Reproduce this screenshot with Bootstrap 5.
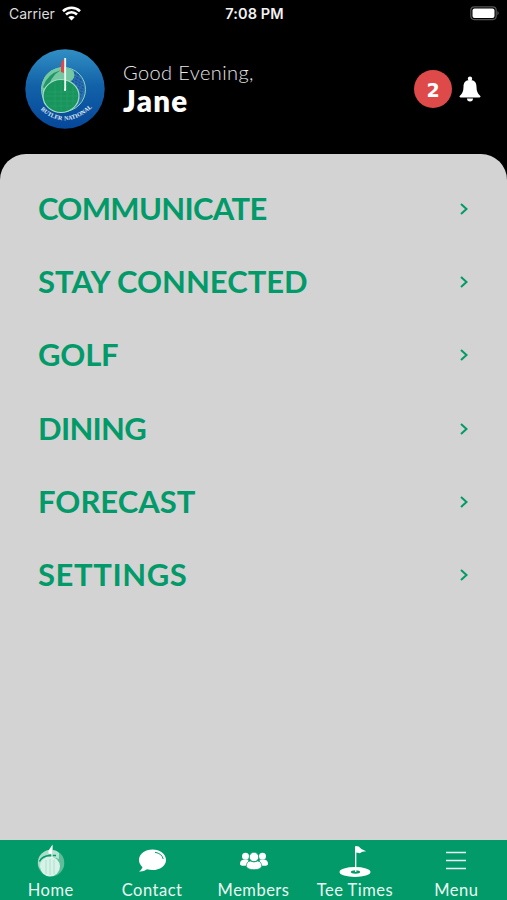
<!DOCTYPE html>
<html lang="en">
<head>
<meta charset="utf-8">
<meta name="viewport" content="width=device-width, initial-scale=1">
<title>Butler National</title>
<link href="https://cdn.jsdelivr.net/npm/bootstrap@5.3.0/dist/css/bootstrap.min.css" rel="stylesheet">
<style>
body{font-family:Lato,"Open Sans",sans-serif;background:#000;-webkit-font-smoothing:antialiased}
svg{display:block;flex:none}
.app{height:900px}
.status-bar{height:27px;padding:0 7px 0 9px;font-family:Inter,Roboto,sans-serif;font-size:14px;color:#dcdcdc;display:grid;grid-template-columns:1fr auto 1fr}
.status-time{font-weight:600;font-size:14.500px;color:#f2f2f2;letter-spacing:.1px}
.signal{margin-left:7px}
.hero{height:127px;padding:0 26px 3px 25px}
.who{margin-left:18px;padding-bottom:1px}
.greeting{font-size:20px;line-height:24px;color:#e6e6e6;font-weight:300;letter-spacing:.4px}
.user-name{font-size:29.500px;line-height:34px;font-weight:800;letter-spacing:1.300px}
.alert-count{width:38px;height:38px;background:#dd4a49;font-family:"DejaVu Sans",sans-serif;font-size:19px;font-weight:700;padding-top:3px}
.alerts{gap:7px}
.panel{background:#d3d3d3;border-radius:26px 26px 0 0;padding-top:18px;color:#029a69}
.menu-row{height:73.3px;padding:0 38px;font-size:31px;font-weight:700;color:inherit;text-decoration:none}
.menu-row span{padding-bottom:1.500px}
.tight{letter-spacing:-.68px}
.snug{letter-spacing:-.2px}
.loose{letter-spacing:.6px}
.tabs{height:60px;background:#029a69}
.tab{color:#e9f8f2;font-size:16.500px;line-height:18px;text-decoration:none;padding-top:4px;letter-spacing:.5px}
.tab-icon{height:37px}
</style>
<script src="https://cdn.jsdelivr.net/npm/bootstrap@5.3.0/dist/js/bootstrap.bundle.min.js"></script>
</head>
<body>
<div class="app d-flex flex-column overflow-hidden">
  <div class="status-bar align-items-center">
    <div class="d-flex align-items-center"><span>Carrier</span>
      <svg class="signal" width="19" height="15" viewBox="0 0 19 15" fill="none" stroke="#fff" stroke-width="2.6"><path d="M1 5.2a12.3 12.3 0 0 1 17 0M4 8.500a8 8 0 0 1 11 0"/><path d="M9.500 14.500 6.300 11.300a4.600 4.600 0 0 1 6.400 0z" fill="#fff" stroke="none"/></svg>
    </div>
    <div class="status-time">7:08 PM</div>
    <div class="d-flex justify-content-end"><svg width="30" height="15" viewBox="0 0 30 15"><rect x=".8" y=".8" width="25.400" height="12.800" rx="3.500" fill="none" stroke="#555" stroke-width="1.200"/><rect x="2.500" y="2.500" width="22" height="9.400" rx="2" fill="#fff"/><path d="M27.500 5q2.200 2.200 0 4.400z" fill="#666"/></svg></div>
  </div>
  <header class="hero d-flex align-items-center text-white">
    <svg width="80" height="80" viewBox="0 0 80 80">
      <defs><linearGradient id="sky" x1="0" y1="0" x2="0" y2="1"><stop offset="0" stop-color="#318fc4"/><stop offset=".45" stop-color="#1262a8"/><stop offset="1" stop-color="#06479a"/></linearGradient><path id="arc" d="M15.500 60.500Q40 83 67 58.500"/></defs>
      <circle cx="40" cy="40" r="39.700" fill="url(#sky)"/>
      <circle cx="38.500" cy="40.500" r="22" fill="#2b6fb0" stroke="#86d5b6" stroke-width="1"/>
      <path d="M49 23.500l5 3m-6 0 9 5m-10-2.500 11 6.500m-11-3.500 12 7m-10-2.500 10 5.500m-7-1 6 4m-4 1 2 2" stroke="#16569f" stroke-width="1.400" stroke-dasharray="2.500 1.200"/>
      <path d="M17 37C18 25 27 18 40 18.500q10 1 9.500 8-1 7-9 6-11-1-15 7-4 6-4 14-5-8-4.500-16.500z" fill="#74c8a2"/>
      <path d="M18 38q4-13 18-17Q25 27 22 43z" fill="#239669"/>
      <ellipse cx="36" cy="47" rx="18" ry="16.500" fill="#17955c" stroke="#a2ddc2" stroke-width="1.200"/>
      <path d="M22 43h29M20 47h32M21 52h30M25 57h22M30 33v27M36 31v31M42 32v29M48 37v20" stroke="#3fb07f" stroke-width=".6" opacity=".5"/>
      <rect x="39.200" y="9" width="1.900" height="32" fill="#e9f6f1"/><circle cx="40" cy="41" r="1" fill="#fff"/>
      <path d="M39 10v14l-3-1V15q1-4 3-5z" fill="#e0454a"/>
      <text font-family="Liberation Serif" font-size="5.900" font-weight="700" fill="#e4f1f8" word-spacing="1"><textPath href="#arc">BUTLER NATIONAL</textPath></text>
    </svg>
    <div class="who me-auto"><div class="greeting">Good Evening,</div><div class="user-name">Jane</div></div>
    <div class="alerts d-flex align-items-center">
      <span class="alert-count rounded-circle d-flex align-items-center justify-content-center">2</span>
      <svg width="22" height="26" viewBox="0 0 22 26" fill="#fff"><circle cx="11" cy="2.800" r="2.200"/><path d="M11 4C6 4 4.500 7 4.500 11q0 6-3.800 9-.8 1 .8 1.400h19q1.600-.4.800-1.400-3.800-3-3.800-9C17.500 7 16 4 11 4z"/><path d="M8 22.400h6q0 3-3 3t-3-3z"/></svg>
    </div>
  </header>
  <main class="panel flex-grow-1 d-flex flex-column">
    <a class="menu-row d-flex align-items-center justify-content-between" href="#"><span class="tight">COMMUNICATE</span><svg width="11" height="14" viewBox="0 0 11 14" fill="none" stroke="currentColor" stroke-width="2"><path d="M3 2 8.500 7 3 12"/></svg></a>
    <a class="menu-row d-flex align-items-center justify-content-between" href="#"><span>STAY CONNECTED</span><svg width="11" height="14" viewBox="0 0 11 14" fill="none" stroke="currentColor" stroke-width="2"><path d="M3 2 8.500 7 3 12"/></svg></a>
    <a class="menu-row d-flex align-items-center justify-content-between" href="#"><span class="snug">GOLF</span><svg width="11" height="14" viewBox="0 0 11 14" fill="none" stroke="currentColor" stroke-width="2"><path d="M3 2 8.500 7 3 12"/></svg></a>
    <a class="menu-row d-flex align-items-center justify-content-between" href="#"><span class="tight">DINING</span><svg width="11" height="14" viewBox="0 0 11 14" fill="none" stroke="currentColor" stroke-width="2"><path d="M3 2 8.500 7 3 12"/></svg></a>
    <a class="menu-row d-flex align-items-center justify-content-between" href="#"><span>FORECAST</span><svg width="11" height="14" viewBox="0 0 11 14" fill="none" stroke="currentColor" stroke-width="2"><path d="M3 2 8.500 7 3 12"/></svg></a>
    <a class="menu-row d-flex align-items-center justify-content-between" href="#"><span class="loose">SETTINGS</span><svg width="11" height="14" viewBox="0 0 11 14" fill="none" stroke="currentColor" stroke-width="2"><path d="M3 2 8.500 7 3 12"/></svg></a>
  </main>
  <nav class="tabs row g-0 flex-nowrap text-center">
    <a class="tab col" href="#"><div class="tab-icon d-flex justify-content-center"><svg width="30" height="34" viewBox="0 0 30 34"><circle cx="15" cy="19" r="13.300" fill="#5fbd9a"/><path d="M2 19C2 11 8 6.500 14 6q-3 4-1 7-6 1-9 12-2-3-2-6z" fill="#a9dfca"/><path d="M17 6q4 .5 6 3v6l-6-2z" fill="#b5e3d2"/><circle cx="14" cy="22.500" r="10" fill="#d7f2e8"/><path d="M3.500 17.500Q6 12 14 11.500h6" stroke="#029a69" stroke-width="1.500" fill="none"/><path d="M10 16v14M14 15v16M18 16v14" stroke="#a3dcc7" stroke-width=".8"/><path d="M16 14V2.500L13 7v2.500l3-.5" fill="#fff" stroke="#fff" stroke-width="1.200"/></svg></div><span>Home</span></a>
    <a class="tab col" href="#"><div class="tab-icon d-flex justify-content-center"><svg width="30" height="34" viewBox="0 0 30 34"><path d="M15.500 5.500C8 5.500 2 10 2 16q0 4 3.500 7.200Q4.500 26 2 27.500q4.500.5 8-2.200 2.500.8 5.500.8C23 26.100 29 22 29 16S23 5.500 15.500 5.500z" fill="#fff"/><path d="M18 8.300q7 1.200 8.200 6.700" fill="none" stroke="#029a69" stroke-width="1"/></svg></div><span>Contact</span></a>
    <a class="tab col" href="#"><div class="tab-icon d-flex justify-content-center"><svg width="30" height="34" viewBox="0 0 30 34" fill="#fff"><circle cx="6.500" cy="12.300" r="3.500"/><circle cx="23.500" cy="12.300" r="3.500"/><path d="M1 20q0-4 3.500-4.200h5L8 21.500q-7 1-7-1.500zM29 20q0-4-3.500-4.200h-5l1.500 5.700q7 1 7-1.500z"/><g stroke="#029a69" stroke-width=".7"><circle cx="15" cy="13" r="4.700"/><path d="M7.300 22.500q0-5 4-5.500 3.700 2 7.400 0 4 .5 4 5.500-1.500 3.200-7.700 3.200t-7.700-3.200z"/></g></svg></div><span>Members</span></a>
    <a class="tab col" href="#"><div class="tab-icon d-flex justify-content-center"><svg width="32" height="34" viewBox="0 0 32 34"><ellipse cx="16" cy="28" rx="15.500" ry="5" fill="#fff"/><ellipse cx="16.500" cy="28" rx="4.600" ry="1.700" fill="#029a69"/><path d="M16.700 28V2.500" stroke="#fff" stroke-width="1.300"/><path d="M16.500 2l3.200.5q2.500 3.500 7.500 4.800-4.500 0-6.500 2-2-.8-4.200-.7z" fill="#fff"/></svg></div><span>Tee Times</span></a>
    <a class="tab col" href="#"><div class="tab-icon d-flex justify-content-center"><svg width="30" height="34" viewBox="0 0 30 34" stroke="#e9f8f2" stroke-width="1.300"><path d="M5 8.500h20M5 16.500h20M5 24.500h20"/></svg></div><span>Menu</span></a>
  </nav>
</div>
</body>
</html>
